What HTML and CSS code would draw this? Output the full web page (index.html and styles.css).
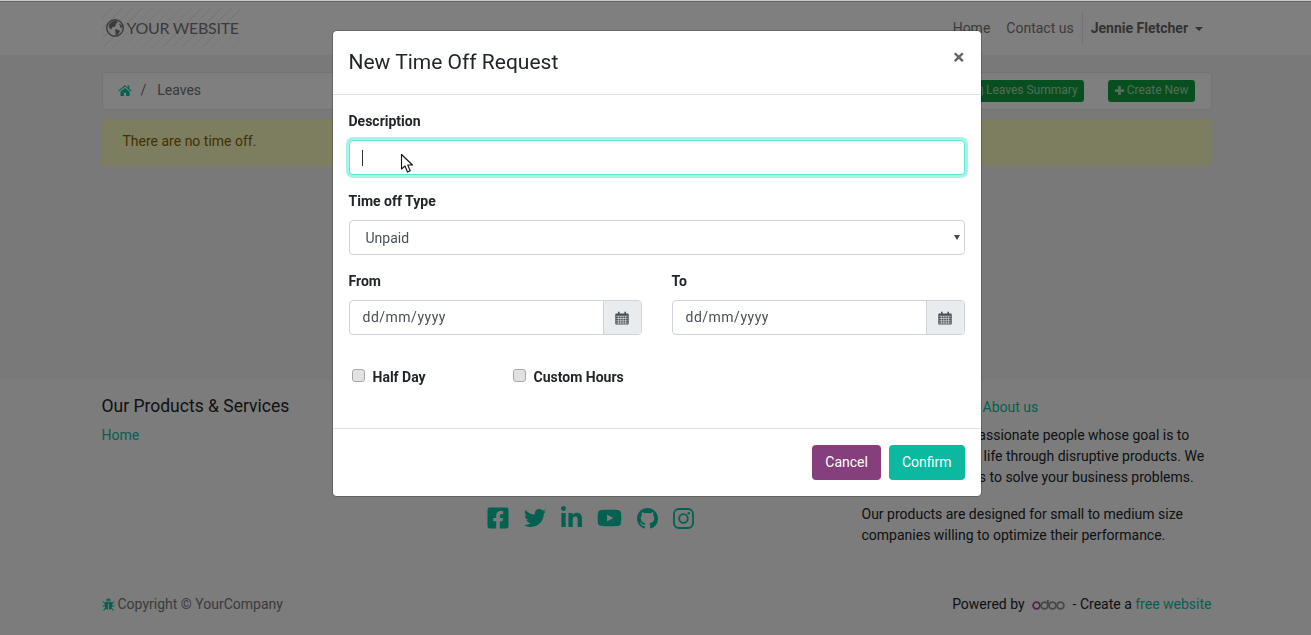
FILE: index.html
```html
<!doctype html>
<html>
    <head>
        <title>New Time Off Request</title>
        <link rel="stylesheet" href="styles.css">
    </head>
    <body>
        <svg class="defs" width="0" height="0">
            <symbol id="i-calendar" viewBox="0 0 14 14">
                <path fill="#495057" d="M1 2.5h2V1.2C3 .7 3.3.4 3.8.4s.8.3.8.8v1.3h4.8V1.2c0-.5.3-.8.8-.8s.8.3.8.8v1.3h2c.4 0 .7.3.7.7v9.6c0 .4-.3.7-.7.7H1c-.4 0-.7-.3-.7-.7V3.200c0-.4.3-.7.7-.7z"/>
                <path stroke="#e9ecef" stroke-width=".6" fill="none" d="M1.200 5.200h11.600M1.200 7.500h11.600M1.200 9.800h11.600M1.200 12h11.600M3.400 5v7.800M5.800 5v7.800M8.200 5v7.800M10.600 5v7.800"/>
            </symbol>
        </svg>

        <header class="site-header">
            <div class="container header-row">
                <a class="logo">
                    <svg class="logo-globe" viewBox="0 0 20 20"><circle cx="10" cy="10" r="9.200" fill="none" stroke="#777777" stroke-width="1.600"/><path fill="#777777" d="M3 7l3-4 5-1.500 2 1.500-2 2.500-1 3-3 .5-1 2.500L3.500 10zM10 11.500l4 .5 1.500 2-3 4h-1.500l-.5-3zM14.500 5l3 2 .5 3-2-.5z"/></svg>
                    <span>YOUR WEBSITE</span>
                </a>
                <nav class="top-nav">
                    <a>Home</a>
                    <a>Contact us</a>
                    <span class="nav-user">Jennie Fletcher <i class="caret-down"></i></span>
                </nav>
            </div>
        </header>

        <main class="container page-main">
            <div class="breadcrumb-bar">
                <div class="crumbs">
                    <svg class="home-icon" viewBox="0 0 16 14"><path fill="#06c2a4" d="M8 .6L.2 7.200l.9 1L8 2.500l6.900 5.700.9-1-3-2.500V1.400h-2v2.600zM2.800 8.300V13.400h3.900V9.600h2.600v3.800h3.900V8.300L8 4z"/></svg>
                    <span class="sep">/</span>
                    <span>Leaves</span>
                </div>
                <div class="crumb-actions">
                    <a class="btn-green"><svg viewBox="0 0 12 12"><path fill="none" stroke="currentColor" d="M1.500 2.500h9v8h-9zM1.500 5h9M4.500 5v5.500M7.500 5v5.500"/></svg>Leaves Summary</a>
                    <a class="btn-green"><svg viewBox="0 0 12 12"><path fill="currentColor" d="M4.500 1h3v3.500H11v3H7.500V11h-3V7.500H1v-3h3.500z"/></svg>Create New</a>
                </div>
            </div>
            <div class="alert-box">There are no time off.</div>
        </main>

        <footer class="site-footer">
            <div class="container footer-grid">
                <section>
                    <h5>Our Products &amp; Services</h5>
                    <a class="green-link">Home</a>
                </section>
                <section class="social-col">
                    <h5>Connect with us</h5>
                    <div class="social">
                        <svg viewBox="0 0 448 512" width="22" height="24"><path d="M400 32H48A48 48 0 0 0 0 80v352a48 48 0 0 0 48 48h137.250V327.690h-63V256h63v-54.640c0-62.150 37-96.480 93.670-96.480 27.140 0 55.520 4.840 55.520 4.840v61h-31.270c-30.810 0-40.420 19.120-40.420 38.730V256h68.780l-11 71.690h-57.780V480H400a48 48 0 0 0 48-48V80a48 48 0 0 0-48-48z"/></svg>
                        <svg viewBox="0 0 512 512" width="22" height="24"><path d="M459.370 151.716c.325 4.548.325 9.097.325 13.645 0 138.720-105.583 298.558-298.558 298.558-59.452 0-114.680-17.219-161.137-47.106 8.447.974 16.568 1.299 25.340 1.299 49.055 0 94.213-16.568 130.274-44.832-46.132-.975-84.792-31.188-98.112-72.772 6.498.974 12.995 1.624 19.818 1.624 9.421 0 18.843-1.300 27.614-3.573-48.081-9.747-84.143-51.980-84.143-102.985v-1.299c13.969 7.797 30.214 12.670 47.431 13.319-28.264-18.843-46.781-51.005-46.781-87.391 0-19.492 5.197-37.360 14.294-52.954 51.655 63.675 129.300 105.258 216.365 109.807-1.624-7.797-2.599-15.918-2.599-24.040 0-57.828 46.782-104.934 104.934-104.934 30.213 0 57.502 12.670 76.670 33.137 23.715-4.548 46.456-13.320 66.599-25.340-7.798 24.366-24.366 44.833-46.132 57.827 21.117-2.273 41.584-8.122 60.426-16.243-14.292 20.791-32.161 39.308-52.628 54.253z"/></svg>
                        <svg viewBox="0 0 448 512" width="21" height="24"><path d="M100.280 448H7.400V148.900h92.880zM53.790 108.100C24.090 108.100 0 83.500 0 53.800a53.790 53.790 0 0 1 107.580 0c0 29.700-24.100 54.300-53.790 54.300zM447.900 448h-92.680V302.400c0-34.700-.7-79.200-48.290-79.200-48.290 0-55.690 37.700-55.690 76.700V448h-92.780V148.900h89.080v40.800h1.300c12.400-23.500 42.690-48.300 87.880-48.300 94 0 111.280 61.900 111.280 142.300V448z"/></svg>
                        <svg viewBox="0 0 576 512" width="25" height="24"><path d="M549.655 124.083c-6.281-23.650-24.787-42.276-48.284-48.597C458.781 64 288 64 288 64S117.220 64 74.629 75.486c-23.497 6.322-42.003 24.947-48.284 48.597-11.412 42.867-11.412 132.305-11.412 132.305s0 89.438 11.412 132.305c6.281 23.650 24.787 41.500 48.284 47.821C117.220 448 288 448 288 448s170.780 0 213.371-11.486c23.497-6.321 42.003-24.171 48.284-47.821 11.412-42.867 11.412-132.305 11.412-132.305s0-89.438-11.412-132.305zm-317.510 213.508V175.185l142.739 81.205-142.739 81.201z"/></svg>
                        <svg viewBox="0 0 16 16" width="21" height="21"><path d="M8 0C3.580 0 0 3.580 0 8c0 3.540 2.290 6.530 5.470 7.590.4.070.55-.17.55-.38 0-.19-.01-.82-.01-1.490-2.010.37-2.530-.49-2.690-.94-.09-.23-.48-.94-.82-1.130-.28-.15-.68-.52-.01-.53.63-.01 1.080.58 1.230.82.72 1.210 1.870.87 2.330.66.07-.52.28-.87.51-1.070-1.780-.2-3.640-.89-3.640-3.950 0-.87.31-1.590.82-2.150-.08-.2-.36-1.020.08-2.120 0 0 .67-.21 2.200.82.64-.18 1.320-.27 2-.27.68 0 1.360.09 2 .27 1.530-1.040 2.200-.82 2.200-.82.44 1.100.16 1.920.08 2.120.51.56.82 1.270.82 2.150 0 3.070-1.870 3.750-3.650 3.950.29.25.54.73.54 1.480 0 1.070-.01 1.930-.01 2.200 0 .21.15.46.55.38A8.013 8.013 0 0 0 16 8c0-4.420-3.580-8-8-8z"/></svg>
                        <svg viewBox="0 0 21 21" width="21" height="21"><rect x="1" y="1" width="19" height="19" rx="5" fill="none" stroke-width="1.800"/><circle cx="10.500" cy="10.500" r="4.300" fill="none" stroke-width="1.800"/><circle cx="15.800" cy="5.200" r="1.300" stroke="none"/></svg>
                    </div>
                </section>
                <section>
                    <div class="about-head"><a class="green-link">About us</a></div>
                    <p>We are a team of passionate people whose goal is to improve everyone's life through disruptive products. We build great products to solve your business problems.</p>
                    <p>Our products are designed for small to medium size companies willing to optimize their performance.</p>
                </section>
            </div>
            <div class="container footer-bottom">
                <span class="copyright">
                    <svg class="bug" viewBox="0 0 14 14"><path fill="#06c2a4" d="M4.500 3a2.500 2.500 0 0 1 5 0zM3.500 4h7v1.500l2-2 .8.800-2.300 2.300V8h2.500v1.100H11a4 4 0 0 1-.5 1.500l2.300 2.300-.8.800-2.200-2.200c-.6.6-1.400 1-2.300 1V6H6.500v6.500c-.9 0-1.700-.4-2.300-1L2 13.700l-.8-.8 2.300-2.300A4 4 0 0 1 3 9.100H.5V8H3V6.600L.7 4.300l.8-.8 2 2z"/></svg>
                    Copyright &copy; YourCompany
                </span>
                <span class="powered">Powered by
                    <svg class="odoo" viewBox="0 0 33 11" role="img" aria-label="odoo">
                        <g fill="none" stroke-width="1.800">
                            <circle cx="4.500" cy="6.500" r="3.400" stroke="#a24689"/>
                            <g stroke="#8f8f8f">
                                <circle cx="12.500" cy="6.500" r="3.400"/>
                                <path d="M15.900 6.500V1"/>
                                <circle cx="20.500" cy="6.500" r="3.400"/>
                                <circle cx="28.500" cy="6.500" r="3.400"/>
                            </g>
                        </g>
                    </svg>
                    - Create a <a class="green-link">free website</a></span>
            </div>
        </footer>

        <div class="backdrop">
            <div class="modal">
                <div class="modal-head">
                    <h4>New Time Off Request</h4>
                    <span class="close">&times;</span>
                </div>
                <form class="modal-body">
                    <label class="lbl">Description</label>
                    <div class="text-field focused"><span class="text-caret"></span></div>
                    <label class="lbl">Time off Type</label>
                    <div class="select-wrap">
                        <select class="type-select"><option>Unpaid</option></select>
                    </div>
                    <div class="date-row">
                        <div>
                            <label class="lbl">From</label>
                            <div class="date-group">
                                <span class="date-value">dd/mm/yyyy</span>
                                <span class="date-addon"><svg width="14" height="14"><use href="#i-calendar"/></svg></span>
                            </div>
                        </div>
                        <div>
                            <label class="lbl">To</label>
                            <div class="date-group">
                                <span class="date-value">dd/mm/yyyy</span>
                                <span class="date-addon"><svg width="14" height="14"><use href="#i-calendar"/></svg></span>
                            </div>
                        </div>
                    </div>
                    <div class="check-row">
                        <label class="check half"><input type="checkbox"><span>Half Day</span></label>
                        <label class="check"><input type="checkbox"><span>Custom Hours</span></label>
                    </div>
                </form>
                <div class="modal-foot">
                    <a class="btn btn-cancel">Cancel</a>
                    <a class="btn btn-confirm">Confirm</a>
                </div>
            </div>
        </div>

        <svg class="pointer" width="14" height="21" viewBox="0 0 14 21"><path d="M1.500 1.500v14.500l3.500-3 2.500 6 2.700-1.200-2.500-5.800h4.800z" fill="#ffffff" stroke="#111111" stroke-width="1.100" stroke-linejoin="round"/></svg>
    </body>
</html>
```

FILE: styles.css
```css
* { margin: 0; padding: 0; box-sizing: border-box; }

html, body {
    height: 100%;
    overflow: hidden;
}

body {
    font-family: 'Roboto', sans-serif;
    font-size: 14px;
    line-height: 21px;
    color: #212529;
    background: #f2f2f2;
    display: flex;
    flex-direction: column;
}

.defs { position: absolute; }

.container {
    width: 1110px;
    margin: 0 auto;
    transform: translateX(1px);
}

/* header */
.site-header {
    height: 55px;
    background: #ffffff;
    border-top: 1px solid #c8c8c8;
    flex: none;
}

.header-row {
    height: 54px;
    display: flex;
    align-items: center;
    justify-content: space-between;
}

.logo {
    width: 138px;
    height: 39px;
    margin-top: -1px;
    display: flex;
    align-items: center;
    gap: 3px;
    padding-left: 4px;
    font-family: 'Lato', sans-serif;
    font-size: 16px;
    white-space: nowrap;
    letter-spacing: -.3px;
    color: #777777;
    background: repeating-linear-gradient(135deg, #f2f2f2 0, #f2f2f2 1px, transparent 1px, transparent 7px);
}

.logo-globe { width: 18px; height: 18px; flex: none; }

.top-nav {
    display: flex;
    align-items: center;
    color: #777777;
    margin-right: 9px;
}

.top-nav a { margin-right: 16px; }

.nav-user {
    display: block;
    border-left: 1px solid #e5e5e5;
    padding: 7px 0 6px 8px;
    margin-left: -8px;
    font-weight: 700;
    color: #666666;
}

.caret-down {
    display: inline-block;
    margin-left: 3px;
    vertical-align: 2px;
    border-top: 4px solid #666666;
    border-left: 4px solid transparent;
    border-right: 4px solid transparent;
}

/* main */
.page-main {
    flex: 1;
    padding-top: 17px;
}

.breadcrumb-bar {
    height: 38px;
    display: flex;
    align-items: center;
    justify-content: space-between;
    padding: 0 16px 1px 15px;
    background: #ffffff;
    border: 1px solid #e6e6e6;
    border-radius: 4px;
    color: #6c757d;
}

.crumbs {
    display: flex;
    align-items: center;
}

.home-icon { width: 14px; height: 13px; margin-right: 9px; }
.sep { margin-right: 11px; }

.crumb-actions {
    display: flex;
    gap: 24px;
}

.btn-green {
    display: flex;
    align-items: center;
    gap: 2px;
    height: 22px;
    padding: 0 6px;
    font-size: 12px;
    color: #a8d8b4;
    background: #0e9f3e;
    border-radius: 3px;
}

.btn-green svg { width: 11px; height: 11px; }

.alert-box {
    height: 47px;
    margin-top: 9px;
    padding: 12px 21px;
    color: #856404;
    background: #fbfbc0;
    border-radius: 4px;
}

/* footer */
.site-footer {
    height: 256px;
    flex: none;
    background: #f8f8f8;
}

.footer-grid {
    height: 196px;
    padding-top: 16px;
    display: grid;
    grid-template-columns: 350px 350px 350px;
    column-gap: 30px;
}

.footer-grid h5 {
    font-size: 17.5px;
    font-weight: 400;
    line-height: 22px;
    margin-bottom: 8px;
}

.green-link { color: #06c2a4; }

.social {
    display: flex;
    align-items: center;
    gap: 15px;
    margin-top: 89px;
    padding-left: 5px;
    fill: #06c2a4;
    stroke: #06c2a4;
}

.social svg:not(:last-child) { stroke: none; }

.about-head {
    height: 24px;
    padding: 2px 0 0 121px;
    margin-bottom: 6px;
}

.footer-grid p { margin-bottom: 16px; }

.footer-bottom {
    height: 60px;
    padding-top: 19px;
    display: flex;
    justify-content: space-between;
}

.copyright { color: #777777; display: flex; align-items: center; height: 21px; gap: 3px; }
.bug { width: 13px; height: 13px; }

.odoo {
    width: 33px;
    height: 11px;
    margin: 0 4px;
    vertical-align: -1px;
}

/* modal */
.backdrop {
    position: fixed;
    top: 1px;
    left: 0;
    right: 0;
    bottom: 0;
    padding-left: 2px;
    border-top: 1px solid rgba(0, 0, 0, .2);
    background: rgba(0, 0, 0, .5);
}

.modal {
    width: 648px;
    height: 465px;
    margin: 29px auto 0;
    background: #ffffff;
    border-radius: 4px;
    box-shadow: 0 0 0 1px rgba(0, 0, 0, .2);
    display: flex;
    flex-direction: column;
}

.modal-head {
    height: 64px;
    flex: none;
    padding: 16px 16px 0;
    display: flex;
    justify-content: space-between;
    border-bottom: 1px solid #dee2e6;
}

.modal-head h4 {
    font-size: 21px;
    font-weight: 400;
    line-height: 30px;
}

.close {
    font-size: 21px;
    font-weight: 700;
    line-height: 21px;
    color: #666666;
}

.modal-body {
    flex: 1;
    padding: 16px 16px 0;
}

.lbl {
    display: block;
    font-weight: 700;
    font-size: 14px;
    height: 21px;
    margin-bottom: 8px;
}

.text-field {
    height: 35px;
    margin-bottom: 16px;
    display: flex;
    align-items: center;
    padding-left: 12px;
    border: 1px solid #5ee7d7;
    border-radius: 4px;
    background: #ffffff;
    box-shadow: 0 0 0 3px #a6f3ea;
}

.text-caret {
    width: 1px;
    height: 16px;
    background: #333333;
}

.select-wrap {
    position: relative;
    margin-bottom: 16px;
}

.select-wrap::after {
    content: '';
    position: absolute;
    top: 15px;
    right: 5px;
    border-top: 5px solid #444444;
    border-left: 3px solid transparent;
    border-right: 3px solid transparent;
}

.type-select {
    display: block;
    width: 100%;
    height: 35px;
    padding-left: 16px;
    appearance: none;
    font-family: inherit;
    font-size: 14px;
    color: #495057;
    background: #ffffff;
    border: 1px solid #ced4da;
    border-radius: 4px;
}

.date-row {
    display: grid;
    grid-template-columns: 293px 293px;
    column-gap: 30px;
}

.date-group {
    height: 35px;
    display: flex;
    border: 1px solid #ced4da;
    border-radius: 4px;
    color: #495057;
    overflow: hidden;
}

.date-value {
    flex: 1;
    padding: 6px 13px;
    letter-spacing: .5px;
}

.date-addon {
    width: 38px;
    display: flex;
    align-items: center;
    justify-content: center;
    background: #e9ecef;
    border-left: 1px solid #ced4da;
}

.check-row {
    display: flex;
    margin-top: 31px;
    padding-left: 3px;
}

.check {
    display: flex;
    align-items: flex-start;
    font-weight: 700;
    height: 21px;
}

.check.half { width: 161px; }

.check input {
    appearance: none;
    width: 13px;
    height: 13px;
    margin: 3px 8px 0 0;
    background: #e2e2e2;
    border: 1px solid #a8a8a8;
    border-radius: 3px;
}

.check span { position: relative; top: 1px; }

.modal-foot {
    height: 68px;
    flex: none;
    display: flex;
    justify-content: flex-end;
    gap: 8px;
    padding: 16px;
    border-top: 1px solid #e0e0e0;
}

.btn {
    height: 35px;
    padding: 0 13px;
    line-height: 34px;
    font-size: 14px;
    color: #ffffff;
    border-radius: 4px;
}

.btn-cancel { background: #843f7c; }
.btn-confirm { background: #0ab9a0; }

.pointer {
    position: fixed;
    left: 400px;
    top: 153px;
}
```
